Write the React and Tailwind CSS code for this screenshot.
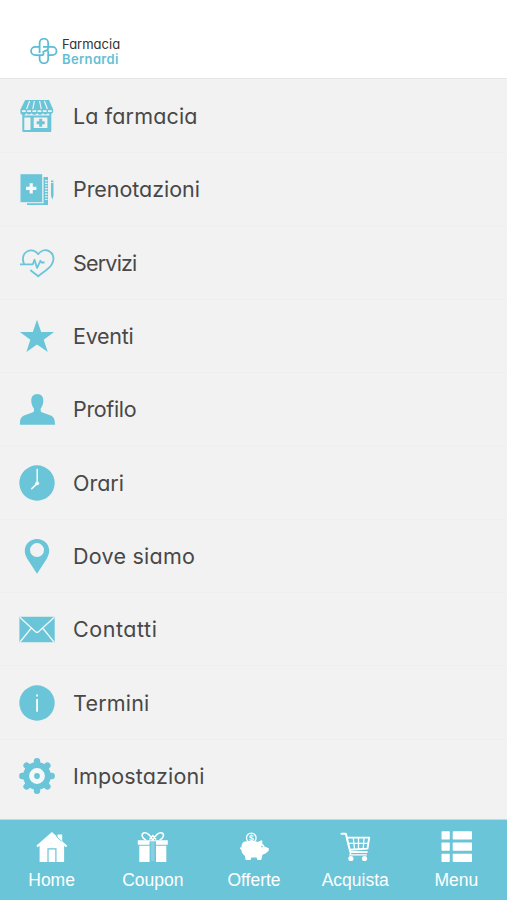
import React from 'react';

const StoreIcon = () => (
  <svg viewBox="0 0 36 36" className="h-9 w-9" fill="#6bc5d8">
    <path d="M6.2 2H30l4.2 9.6v2.2a3 3 0 0 1-5.2 1.4 3.3 3.3 0 0 1-5.2 0 3.3 3.3 0 0 1-5.6 0 3.3 3.3 0 0 1-5.6 0 3.3 3.3 0 0 1-5.4 0A3 3 0 0 1 1.4 13.8v-2.2z" />
    <path d="M10.6 3 7.6 11M15.4 3l-1.6 8M20.6 3l1.6 8M25.4 3l3 8" stroke="#f2f2f2" strokeWidth="1.2" fill="none" />
    <path d="M3 13.2h30" stroke="#f2f2f2" strokeWidth="1.8" strokeDasharray="3.8 1.4" fill="none" />
    <path d="M3.3 16h2v16h25V16h2v17a1 1 0 0 1-1 1h-27a1 1 0 0 1-1-1z" />
    <path d="M5 17.5h26v1.9H5zM11.5 19h3.2v13.5h-3.2zM28.4 19h2.6v13h-2.6zM14 30h15v2H14z" />
    <path d="M20.2 20.8h3v2.5h2.5v3h-2.5v2.5h-3v-2.5h-2.5v-3h2.5z" />
  </svg>
);

const BookingIcon = () => (
  <svg viewBox="0 0 36 36" className="h-9 w-9" fill="#6bc5d8">
    <path d="M1.5 3.2h21.7v28H1.5z" />
    <path d="M24.5 6H29v28H8v-1.7h16.5z" />
    <path d="M27.3 9v21" stroke="#f2f2f2" strokeWidth="2.4" strokeDasharray="1.2 1.5" />
    <path d="M10.6 12.3h3.2v3.5h3.6V19h-3.6v3.5h-3.2V19H7v-3.2h3.6z" fill="#f8f8f8" />
    <path d="M32 9.5h2.5v15.2l-1.2 4-1.3-4z" />
    <path d="M31.5 11.5h3.5" stroke="#f2f2f2" strokeWidth=".8" />
  </svg>
);

const HeartIcon = () => (
  <svg viewBox="0 0 36 36" className="h-9 w-9" fill="none" stroke="#6bc5d8" strokeWidth="1.8" strokeLinejoin="round">
    <path d="M1 19.3h12.8l1.7-4.5 2.6 8.2 3.3-7.2 1.2 1.7h3" />
    <path d="M5 18.8C2.8 13.5 4.2 8.2 8.5 6.2c3.8-1.8 8.3-.5 10.7 3 2.7-3.7 7-5 10.8-3.1 4.8 2.4 5.7 8.6 2.7 13.4-2.8 4.5-7.7 7.1-13.5 11.8-3-2.5-5.5-4.2-7.8-6.3" />
  </svg>
);

const StarIcon = () => (
  <svg viewBox="0 0 36 36" className="h-9 w-9" fill="#6bc5d8">
    <path d="m18 1.7 4.2 12.4 12.9-.1-10.4 7.8 4.1 12.3-10.8-7.5-10.6 7.5 3.9-12.3L.9 14l12.9.1z" />
  </svg>
);

const ProfileIcon = () => (
  <svg viewBox="0 0 36 36" className="h-9 w-9" fill="#6bc5d8">
    <path d="M18.3 3.1c4.2 0 6.3 3 6 7.2-.2 3.5-1.3 5.7-2.6 7.2v2.1c0 1 .7 1.6 1.8 2l7.6 2.7c3.6 1.2 4.9 3.9 4.9 9.4H.9c0-5.5 1.2-8.2 4.8-9.4l7.6-2.7c1.1-.4 1.7-1 1.7-2v-2.1c-1.4-1.5-2.5-3.7-2.7-7.2-.3-4.2 1.8-7.2 6-7.2z" />
  </svg>
);

const ClockIcon = () => (
  <svg viewBox="0 0 36 36" className="h-9 w-9">
    <circle cx="18" cy="18" r="17.7" fill="#6bc5d8" />
    <path d="M18.2 3.8v14.4l-5.9 5.9" fill="none" stroke="#f3fafb" strokeWidth="1.5" />
    <path d="m17.2 17.2 2 1.8-4.8 3.8z" fill="#f3fafb" />
    <circle cx="18.2" cy="18.3" r="1.9" fill="#f3fafb" />
  </svg>
);

const PinIcon = () => (
  <svg viewBox="0 0 36 36" className="h-9 w-9" fill="#6bc5d8">
    <path fillRule="evenodd" d="M18 .9c7 0 12.2 5.1 12.2 11.8 0 3-1.1 5.3-2.4 8L18 35.7 8.2 20.7c-1.4-2.7-2.4-5-2.4-8C5.8 6 11 .9 18 .9zM18 5.1a7 7 0 1 0 0 14 7 7 0 0 0 0-14z" />
  </svg>
);

const MailIcon = () => (
  <svg viewBox="0 0 36 36" className="h-9 w-9">
    <path d="M.4 5.8h35.3v25.4H.4z" fill="#6bc5d8" />
    <path d="m.8 6.2 15.7 14.5c1 .9 2 .9 3 0L35.3 6.2M1 31l11.4-14M35 31 23.6 17" fill="none" stroke="#f2f6f7" strokeWidth="1.3" />
  </svg>
);

const InfoIcon = () => (
  <svg viewBox="0 0 36 36" className="h-9 w-9">
    <circle cx="18" cy="18" r="17.7" fill="#6bc5d8" />
    <path d="M17.1 14h1.9v12.8h-1.9zM17.1 9.4h1.9v2.2h-1.9z" fill="#f3fafb" />
  </svg>
);

const GearIcon = () => (
  <svg viewBox="0 0 36 36" className="h-9 w-9">
    <circle cx="18" cy="18" r="10.6" fill="none" stroke="#6bc5d8" strokeWidth="6.6" />
    <path
      d="M18 3.3v4M18 28.7v4M3.3 18h4M28.7 18h4M7.6 7.6l3 3M25.4 25.4l3 3M28.4 7.6l-3 3M10.6 25.4l-3 3"
      stroke="#6bc5d8"
      strokeWidth="6.4"
      strokeLinecap="round"
    />
    <circle cx="18" cy="18" r="5.4" fill="none" stroke="#f4f8f9" strokeWidth="5" />
    <circle cx="18" cy="18" r="2.9" fill="#6bc5d8" />
  </svg>
);

const HomeIcon = () => (
  <svg viewBox="0 0 32 32" className="h-8 w-8" fill="#fff">
    <path d="M21.2 3.5h5v7.3l-5-4.8z" />
    <path d="M15.9 1 31.3 14.8l-1.3 1.4-1.9-1.4v16.3H3.6V14.8l-2 1.4-1.3-1.4z" />
    <path d="M12 31V17.8h7.9V31" fill="none" stroke="#6bc5d8" strokeWidth="1.2" />
    <path d="m20.9 3.2v2.8l4.8 4.3" fill="none" stroke="#6bc5d8" strokeWidth=".9" />
  </svg>
);

const GiftIcon = () => (
  <svg viewBox="0 0 32 32" className="h-8 w-8" fill="#fff">
    <path d="M.8 9.2h30v4.6H.8zM2.3 14.8h27v16.2h-27z" />
    <path d="M15.8 9.3C13.8 4.5 9.5.8 6.6 2 3.8 3.4 5.2 7.6 9 9M15.8 9.3C17.8 4.5 22.1.8 25 2c2.8 1.4 1.4 5.6-2.4 7M12.5 8.6l3.3-4 3.3 4" fill="none" stroke="#fff" strokeWidth="1.5" />
    <path d="M12.6 10.3H19v20.8h-6.4z" fill="#6bc5d8" />
    <path d="M14 10.3h3.6V30H14z" fill="#fff" fillOpacity=".2" />
  </svg>
);

const PiggyIcon = () => (
  <svg viewBox="0 0 32 32" className="h-8 w-8" fill="#fff">
    <circle cx="13.3" cy="6.9" r="4.8" fill="none" stroke="#fff" strokeWidth="1.3" />
    <text x="13.3" y="10" textAnchor="middle" fontSize="8.5" fontWeight="700" fontFamily="Liberation Sans, sans-serif">$</text>
    <path d="M5.2 11.2c4-1.4 11-1.4 15.2-.3 1.2-1.1 2.4-1.5 4-1.5l-.2 3.2c1.2.8 1.9 1.8 2.3 2.8l4.3 1.8v2.4c-1.8 2.3-4 3.6-6.3 4.2l-1.3 5.2h-3.9l-.7-2.6h-5.3l-.7 2.6H7.7l-.9-4.3c-2.2-1.6-3.4-3.5-3.4-6-.9-.2-1.5-1.3-1.5-2.8l1.4 1c.1-2.4.7-4.5 1.9-5.7z" />
    <circle cx="24" cy="15.6" r=".8" fill="#6bc5d8" />
  </svg>
);

const CartIcon = () => (
  <svg viewBox="0 0 32 32" className="h-8 w-8" fill="none" stroke="#fff">
    <path d="M2.5 2.8h4.3l4.5 18.3h16.4" strokeWidth="2" strokeLinecap="round" strokeLinejoin="round" />
    <path d="M7.8 6.6h22.4l-1.7 11-18 1.2" strokeWidth="1.9" strokeLinejoin="round" />
    <path d="M14.3 7l1.2 11M19.5 7v11M25 7l-.8 11M8.5 12.3h20.8" strokeWidth="1.3" />
    <path d="M12 21.3 10.9 23.8h17" strokeWidth="1.2" />
    <circle cx="11.9" cy="27.5" r="2.6" fill="#fff" stroke="none" />
    <circle cx="25.5" cy="27.5" r="2.6" fill="#fff" stroke="none" />
  </svg>
);

const ListIcon = () => (
  <svg viewBox="0 0 32 32" className="h-8 w-8" fill="#fff">
    {[0.2, 11.5, 22.7].map((y) => (
      <g key={y}>
        <rect x="1.5" y={y} width="8.3" height="8.3" rx=".7" />
        <rect x="12.7" y={y} width="19.3" height="8.3" rx=".7" />
      </g>
    ))}
  </svg>
);

const MENU_ITEMS = [
  { label: 'La farmacia', icon: StoreIcon, tracking: 'tracking-[0.15px]' },
  { label: 'Prenotazioni', icon: BookingIcon, tracking: 'tracking-[-0.05px]' },
  { label: 'Servizi', icon: HeartIcon, tracking: 'tracking-[-0.8px]' },
  { label: 'Eventi', icon: StarIcon, tracking: 'tracking-[-0.25px]' },
  { label: 'Profilo', icon: ProfileIcon, tracking: 'tracking-[-0.35px]' },
  { label: 'Orari', icon: ClockIcon, tracking: 'tracking-[0px]' },
  { label: 'Dove siamo', icon: PinIcon, tracking: 'tracking-[0.25px]' },
  { label: 'Contatti', icon: MailIcon, tracking: 'tracking-[0.55px]' },
  { label: 'Termini', icon: InfoIcon, tracking: 'tracking-[0.2px]' },
  { label: 'Impostazioni', icon: GearIcon, tracking: 'tracking-[0.15px]' },
];

const TABS = [
  { label: 'Home', icon: HomeIcon },
  { label: 'Coupon', icon: GiftIcon },
  { label: 'Offerte', icon: PiggyIcon },
  { label: 'Acquista', icon: CartIcon },
  { label: 'Menu', icon: ListIcon },
];

// Four-loop knot plus the two-line wordmark
const Logo = () => (
  <div className="flex items-center gap-[4px]">
    <svg viewBox="0 0 28 26" className="h-[26px] w-[28px]" fill="none" stroke="#5bbdd3" strokeWidth="1.8">
      <path d="M9.6 15V5a4.3 4.3 0 0 1 8.6 0v4.4c0 2.4-1.6 3.6-4.3 3.6" />
      <path d="M13 8.8h9.3a4.2 4.2 0 0 1 0 8.4H18" />
      <path d="M18.2 12.6V21a4.3 4.3 0 0 1-8.6 0v-3.6" />
      <path d="M13.4 17.2H5.3a4.2 4.2 0 0 1 0-8.4h4.3M13.4 17.2V13" />
    </svg>
    <div className="flex flex-col pt-[3px] text-[13px] leading-[15px]">
      <span className="tracking-[0px] text-[#333]">Farmacia</span>
      <span className="font-semibold tracking-[0.35px] text-[#65bfd4]">Bernardi</span>
    </div>
  </div>
);

const App = () => {
  return (
    <div className="flex h-[900px] w-[507px] flex-col overflow-hidden bg-[#f2f2f2] font-['Inter',sans-serif] [font-feature-settings:'cv11']">
      <header className="flex h-[79px] flex-shrink-0 items-end border-b border-[#e6e6e6] bg-white pb-[11px] pl-[30px]">
        <Logo />
      </header>

      <ul className="flex flex-1 flex-col pt-px">
        {MENU_ITEMS.map(({ label, icon: Icon, tracking }) => (
          <li key={label} className="flex h-[73.3px] flex-shrink-0 items-center gap-[18px] border-b border-[#efefef] pl-[19px] last:border-transparent">
            <Icon />
            <span className={`text-[21.5px] leading-8 text-[#484848] ${tracking}`}>{label}</span>
          </li>
        ))}
      </ul>

      <nav className="flex h-[81px] flex-shrink-0 border-t border-[#b9dde5] bg-[#6bc5d8] pl-px font-['Liberation_Sans',sans-serif] text-white">
        {TABS.map(({ label, icon: Icon }) => (
          <button key={label} type="button" className="flex flex-1 flex-col items-center pt-[11px]">
            <Icon />
            <span className="mt-[5px] text-[17.5px] leading-6">{label}</span>
          </button>
        ))}
      </nav>
    </div>
  );
};

export default App;
